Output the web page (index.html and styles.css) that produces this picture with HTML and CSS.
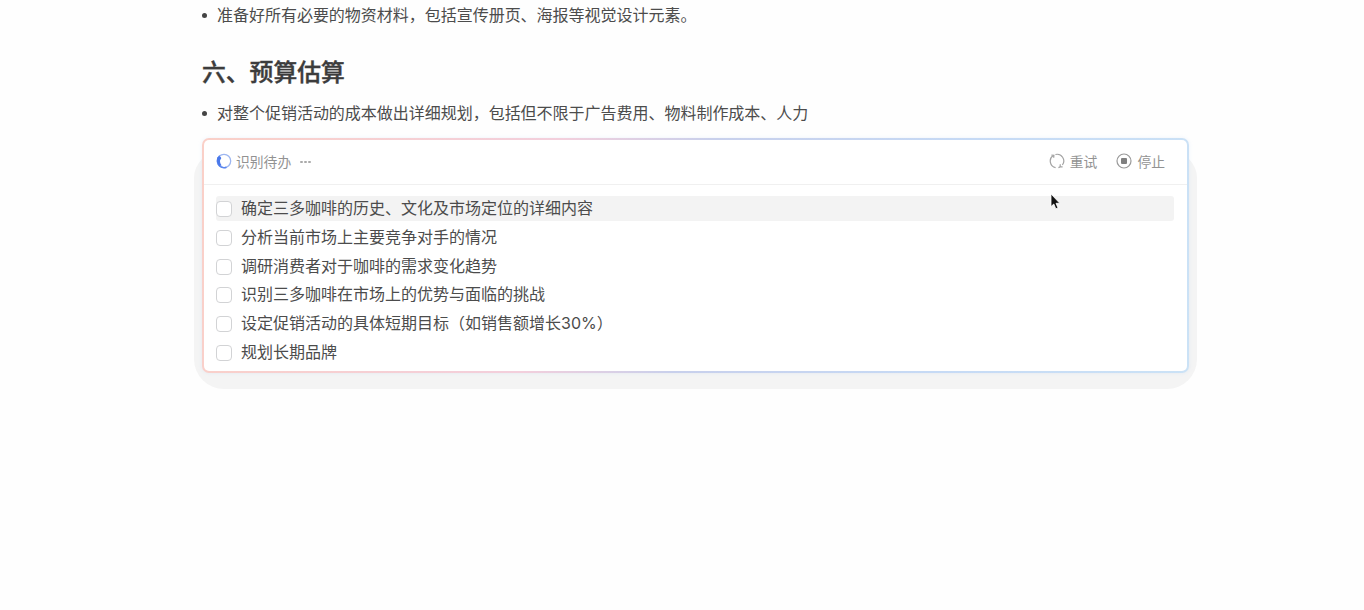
FILE: index.html
```html
<!DOCTYPE html>
<html lang="zh-CN">
<head>
    <meta charset="UTF-8">
    <meta name="viewport" content="width=device-width, initial-scale=1.0">
    <title>预算估算</title>
    <link rel="stylesheet" href="styles.css">
</head>
<body>
    <main class="doc">
        <ul class="bullets">
            <li>准备好所有必要的物资材料，包括宣传册页、海报等视觉设计元素。</li>
        </ul>

        <h2>六、预算估算</h2>

        <ul class="bullets">
            <li>对整个促销活动的成本做出详细规划，包括但不限于广告费用、物料制作成本、人力</li>
        </ul>

        <section class="ai-card">
            <div class="ai-panel">
                <header class="ai-header">
                    <svg width="16" height="16" viewBox="0 0 16 16" fill="none">
                        <circle cx="8" cy="8" r="6.7" stroke="#9db6f0" stroke-width="1.3"/>
                        <path d="M3.8 2.8A6.7 6.7 0 0 0 10.5 14.2" stroke="#5b86ee" stroke-width="1.5"/>
                        <path d="M1.3 4.6C2.6 3.4 5 3.4 5.2 5C5.3 6.1 4.1 6.4 4 7.8C3.9 9.6 4.6 10.8 5.6 12.4L3.4 13C1.2 10.8.6 7.4 1.3 4.6Z" fill="#4a78ea"/>
                    </svg>
                    <span class="ai-title">识别待办</span>
                    <span class="dots"><i></i><i></i><i></i></span>

                    <button class="action retry">
                        <svg width="16" height="16" viewBox="0 0 16 16" fill="none" stroke="#a3a3a3" stroke-width="1.2">
                            <path d="M6.6 14.6A6.7 6.7 0 0 1 4.2 2.5M2.4 2.2L4.9 2.3L4.7 4.8"/>
                            <path d="M6.4 1.5A6.7 6.7 0 0 1 13.4 12M9.4 14.6A6.7 6.7 0 0 0 11.8 13.5M13.6 13.8L11.1 13.7L11.3 11.2"/>
                        </svg>
                        <span>重试</span>
                    </button>
                    <button class="action">
                        <svg width="16" height="16" viewBox="0 0 16 16" fill="none">
                            <circle cx="8" cy="8" r="7" stroke="#999" stroke-width="1.2"/>
                            <rect x="5" y="5" width="6" height="6" rx="1" fill="#808080"/>
                        </svg>
                        <span>停止</span>
                    </button>
                </header>

                <ul class="todos">
                    <li class="active"><span class="box"></span>确定三多咖啡的历史、文化及市场定位的详细内容</li>
                    <li><span class="box"></span>分析当前市场上主要竞争对手的情况</li>
                    <li><span class="box"></span>调研消费者对于咖啡的需求变化趋势</li>
                    <li><span class="box"></span>识别三多咖啡在市场上的优势与面临的挑战</li>
                    <li><span class="box"></span>设定促销活动的具体短期目标（如销售额增长30%）</li>
                    <li><span class="box"></span>规划长期品牌</li>
                </ul>
            </div>
        </section>
    </main>

    <!-- mouse pointer -->
    <svg class="cursor" width="12" height="18" viewBox="0 0 12 18">
        <path d="M1 1V13.6L3.8 11L5.8 15.8L8 14.9L6 10.3H9.8Z" fill="#111" stroke="#fff" stroke-width=".8"/>
    </svg>
</body>
</html>
```

FILE: styles.css
```css
* {
    box-sizing: border-box;
}
body {
    margin: 0;
    min-height: 100vh;
    background: #fefefe;
    color: #4c4c4c;
    font-family: Inter, "Noto Sans CJK SC", sans-serif;
    font-size: 16px;
}
ul {
    list-style: none;
    margin: 0;
    padding: 0;
}
.doc {
    width: 987px;
    margin-left: 202px;
    padding-top: 3px;
}
.bullets li {
    display: flex;
    align-items: center;
    height: 24px;
    line-height: 24px;
    letter-spacing: -.02px;
    white-space: nowrap;
}
.bullets li::before {
    content: "";
    width: 5px;
    height: 5px;
    margin: 1px 10px 0 0;
    border-radius: 50%;
    background: #444;
}
h2 {
    margin: 28px 0 10px;
    height: 36px;
    line-height: 36px;
    font-size: 23.8px;
    font-weight: 500;
    color: #3c3c3c;
    -webkit-text-stroke: .4px #3c3c3c;
}

/* card with gradient outline */
.ai-card {
    position: relative;
    z-index: 0;
    height: 235px;
    margin-top: 13px;
}
.ai-card::before {
    content: "";
    position: absolute;
    z-index: -1;
    inset: 14px -8px -16px;
    border-radius: 26px 26px 30px 30px;
    background: #f4f4f4;
}
.ai-panel {
    height: 100%;
    border: 2px solid transparent;
    border-radius: 7px;
    background:
        linear-gradient(#fff, #fff) padding-box,
        linear-gradient(100deg, #fad0c8 0%, #f3cfdc 35%, #c8d0ec 50%, #c6daf5 75%, #cbe2f6 100%) border-box;
    box-shadow: 0 0 4px rgba(170, 200, 240, .2);
}
.ai-header {
    display: flex;
    align-items: center;
    height: 45px;
    padding: 0 22px 2px 12px;
    border-bottom: 1px solid #f0f0f0;
    color: #929292;
    font-size: 13.8px;
}
.ai-title,
.action span {
    margin-top: -1px;
}
.ai-title {
    margin-left: 4px;
}
.dots {
    display: flex;
    gap: 1px;
    margin: 1px 0 0 9px;
}
.dots i {
    width: 3px;
    height: 2px;
    border-radius: 1px;
    background: #aaa;
}
.action {
    display: flex;
    align-items: center;
    gap: 5px;
    padding: 0;
    border: 0;
    background: none;
    color: #929292;
    font: inherit;
}
.action + .action {
    margin-left: 19px;
}
.retry {
    margin-left: auto;
}
.todos {
    display: flex;
    flex-direction: column;
    gap: 3.8px;
    padding: 11px 13px 0 12px;
}
.todos li {
    display: flex;
    align-items: center;
    height: 25px;
    line-height: 25px;
    border-radius: 3px;
}
.todos .active {
    background: #f3f3f3;
}
.box {
    width: 16px;
    height: 16px;
    margin: 1px 9px 0 0;
    border: 1px solid #d2d3d5;
    border-radius: 4px;
    background: #fff;
}
.cursor {
    position: absolute;
    left: 1050px;
    top: 193px;
}
```
